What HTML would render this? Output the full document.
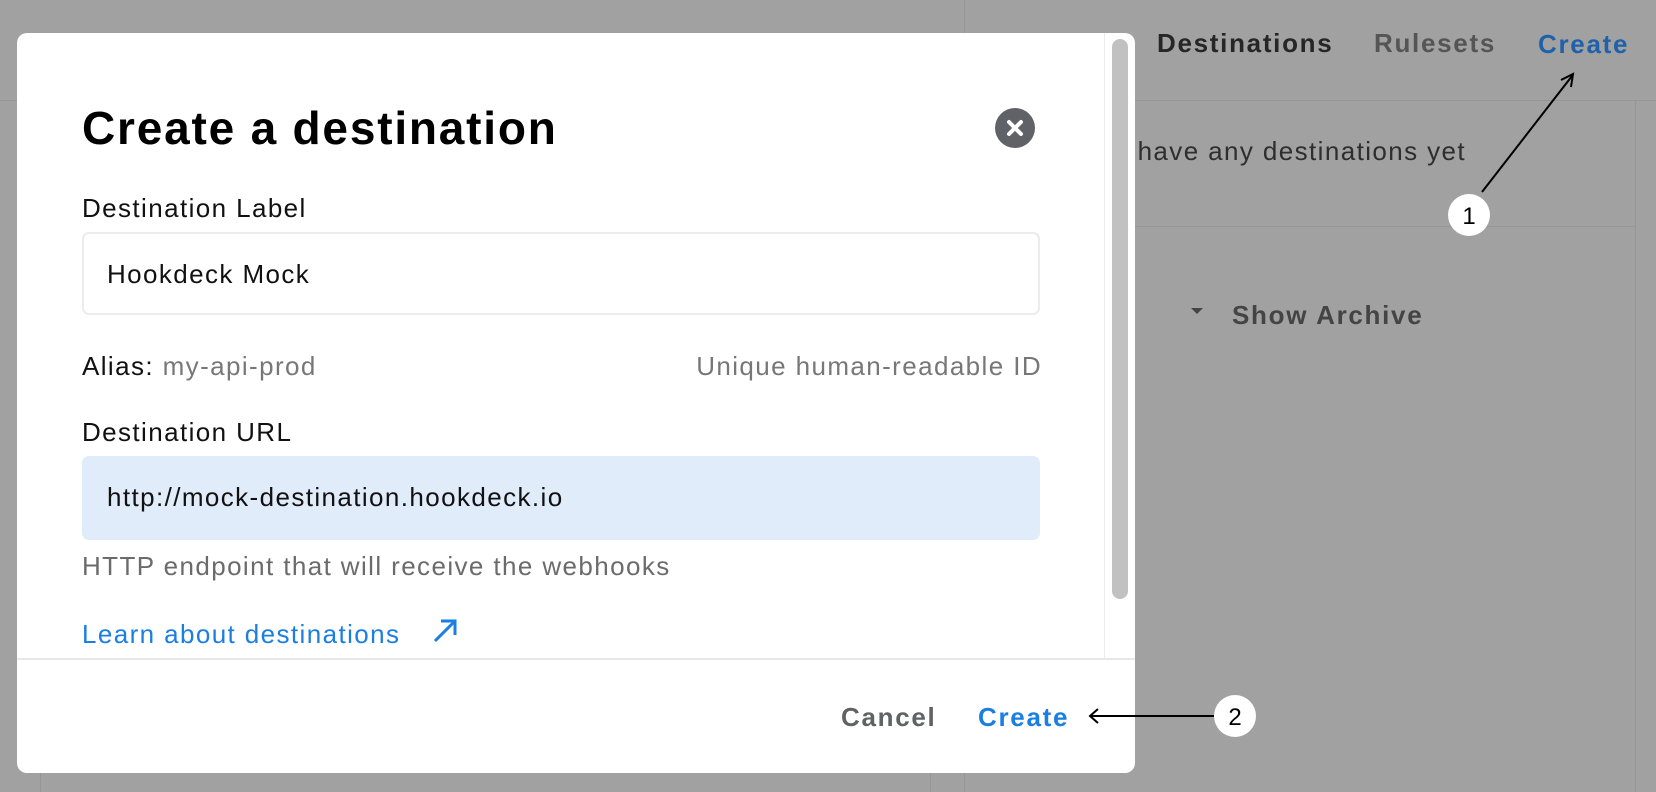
<!DOCTYPE html>
<html><head><meta charset="utf-8"><style>
*{margin:0;padding:0;box-sizing:border-box}
body{width:1656px;height:792px;overflow:hidden;background:#a1a1a1;font-family:"Liberation Sans",sans-serif;position:relative}
.a{position:absolute;white-space:nowrap}
.t{font-size:26px;letter-spacing:1.4px}
.b{font-size:26px;font-weight:bold;letter-spacing:1.7px}
.ln{position:absolute;background:#969696}
</style></head><body>
<div class="ln" style="left:0;top:100px;width:17px;height:1px"></div>
<div class="ln" style="left:964px;top:0;width:1px;height:792px"></div>
<div class="ln" style="left:1135px;top:100px;width:521px;height:1px"></div>
<div class="ln" style="left:1135px;top:226px;width:500px;height:1px"></div>
<div class="ln" style="left:1635px;top:100px;width:1px;height:692px"></div>
<div class="ln" style="left:40px;top:773px;width:1px;height:19px"></div>
<div class="ln" style="left:930px;top:773px;width:1px;height:19px"></div>

<div class="a b" style="left:1157px;top:28px;color:#262626">Destinations</div>
<div class="a b" style="left:1374px;top:28px;color:#555">Rulesets</div>
<div class="a b" style="left:1538px;top:29px;color:#1f62aa">Create</div>
<div class="a t" style="right:190px;top:136px;color:#2e2e2e">You don't have any destinations yet</div>
<div class="a" style="left:1191px;top:308px;width:0;height:0;border-left:6px solid transparent;border-right:6px solid transparent;border-top:6px solid #444"></div>
<div class="a b" style="left:1232px;top:300px;color:#444">Show Archive</div>

<div class="a" style="left:17px;top:33px;width:1118px;height:740px;background:#fff;border-radius:10px;overflow:hidden">
  <div class="a" style="left:1087px;top:0;width:1px;height:626px;background:#ececec"></div>
  <div class="a" style="left:1095px;top:6px;width:16px;height:560px;background:#c1c1c1;border-radius:8px"></div>
  <div class="a" style="left:65px;top:68px;font-size:46px;font-weight:bold;color:#000;letter-spacing:1.8px">Create a destination</div>
  <div class="a" style="left:978px;top:75px;width:40px;height:40px;border-radius:50%;background:#5f6368">
    <svg width="40" height="40"><path d="M14 14L26 26M26 14L14 26" stroke="#fff" stroke-width="4" stroke-linecap="round"/></svg>
  </div>
  <div class="a t" style="left:65px;top:160px;color:#111">Destination Label</div>
  <div class="a" style="left:65px;top:199px;width:958px;height:83px;border:2px solid #ececec;border-radius:7px"></div>
  <div class="a t" style="left:90px;top:226px;color:#111">Hookdeck Mock</div>
  <div class="a t" style="left:65px;top:318px;color:#111">Alias: <span style="color:#777">my-api-prod</span></div>
  <div class="a t" style="right:93px;top:318px;color:#777">Unique human-readable ID</div>
  <div class="a t" style="left:65px;top:384px;color:#111">Destination URL</div>
  <div class="a" style="left:65px;top:423px;width:958px;height:84px;background:#e1ecfa;border-radius:7px"></div>
  <div class="a t" style="left:90px;top:449px;color:#111">http://mock-destination.hookdeck.io</div>
  <div class="a t" style="left:65px;top:518px;color:#6b6b6b">HTTP endpoint that will receive the webhooks</div>
  <div class="a t" style="left:65px;top:586px;color:#1a7fe0">Learn about destinations</div>
  <svg class="a" style="left:414px;top:584px" width="28" height="28"><path d="M4 24L24 4M10 4H24V18" stroke="#1a7fe0" stroke-width="3" fill="none"/></svg>
  <div class="a" style="left:0;top:625px;width:1118px;height:2px;background:#e8e8ea"></div>
  <div class="a b" style="left:824px;top:669px;color:#606266">Cancel</div>
  <div class="a b" style="left:961px;top:669px;color:#1a7fe0">Create</div>
</div>

<svg class="a" style="left:0;top:0" width="1656" height="792">
  <line x1="1482" y1="192" x2="1572" y2="76" stroke="#000" stroke-width="2"/>
  <path d="M1561 80L1573 74L1571 87" stroke="#000" stroke-width="2" fill="none"/>
  <circle cx="1469" cy="215" r="21" fill="#fff"/>
  <text x="1469" y="224" font-family="Liberation Sans" font-size="24" text-anchor="middle" fill="#000">1</text>
  <line x1="1214" y1="716" x2="1090" y2="716" stroke="#000" stroke-width="2"/>
  <path d="M1098 709L1090 716L1098 723" stroke="#000" stroke-width="2" fill="none"/>
  <circle cx="1235" cy="716" r="21" fill="#fff"/>
  <text x="1235" y="725" font-family="Liberation Sans" font-size="24" text-anchor="middle" fill="#000">2</text>
</svg>
</body></html>
